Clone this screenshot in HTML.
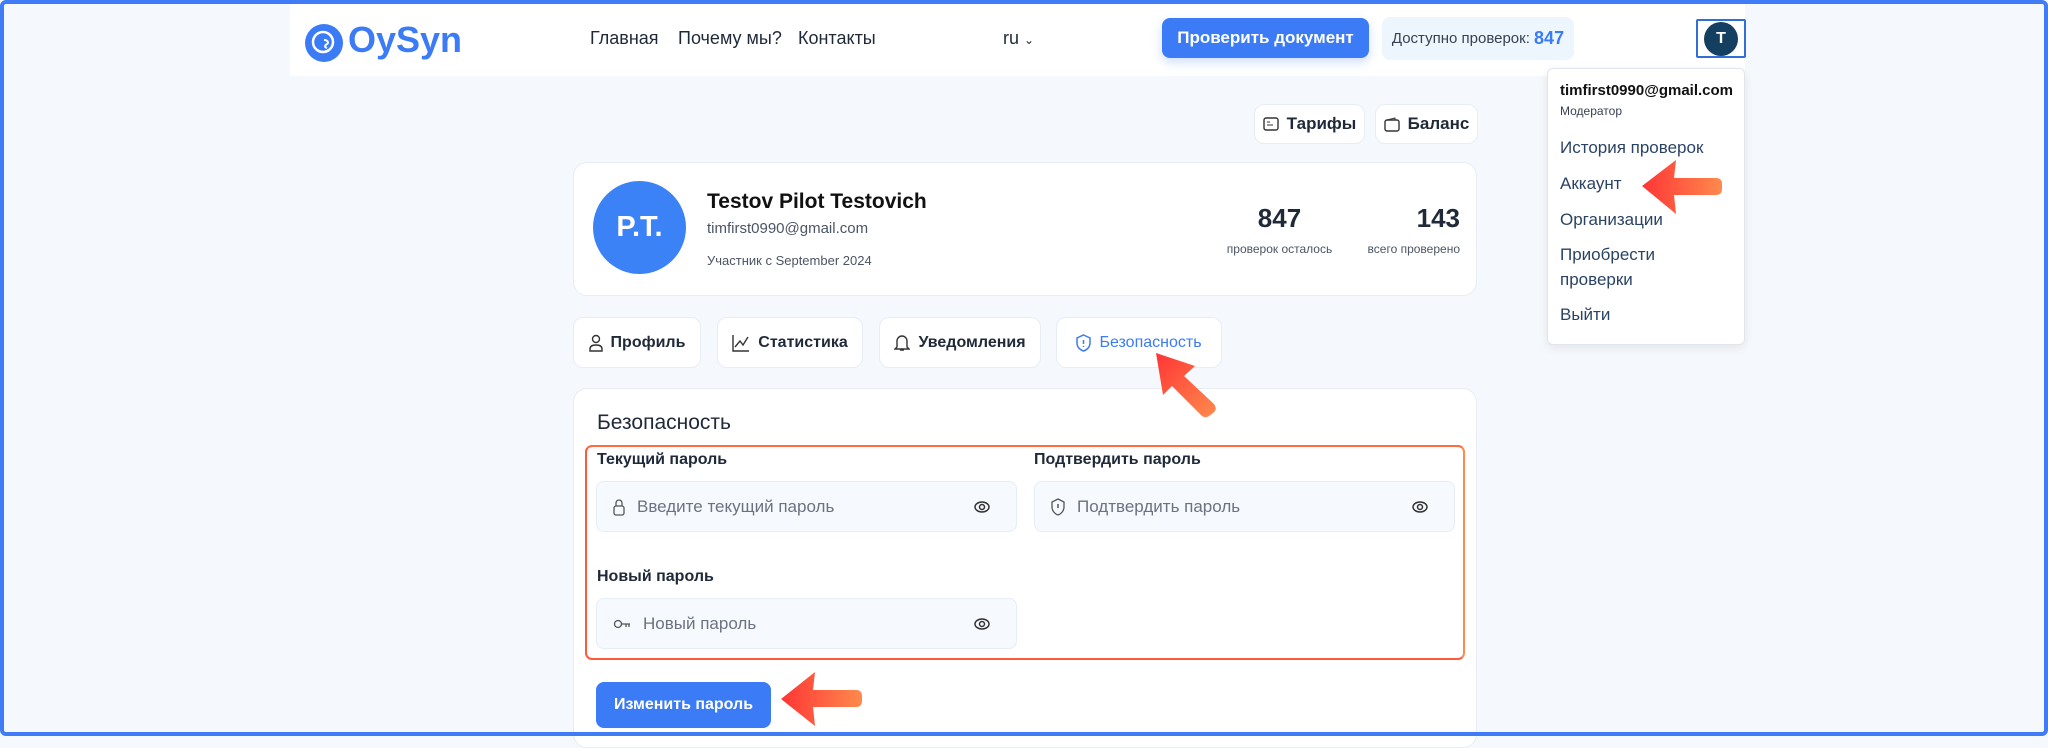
<!DOCTYPE html>
<html><head><meta charset="utf-8"><style>
*{box-sizing:border-box;margin:0;padding:0}
body{width:2048px;height:736px;overflow:hidden;background:#f5f8fc;font-family:"Liberation Sans","Noto Sans CJK SC",sans-serif;color:#1f2937;position:relative}
.frame{position:absolute;inset:0;border:4px solid #3f7cf5;border-radius:6px;pointer-events:none;z-index:50}
.abs{position:absolute}
.hdr{left:290px;top:0;width:1455px;height:76px;background:#fff}
.nav{font-size:18px;color:#1f2937;top:28px}
.btn{background:#3b7bf6;color:#fff;font-weight:bold;border-radius:8px;display:flex;align-items:center;justify-content:center}
.card{background:#fff;border:1px solid #e6edf5;border-radius:14px}
.wb{background:#fff;border:1px solid #e6edf5;border-radius:10px;display:flex;align-items:center;justify-content:center;font-size:17px;font-weight:bold;color:#1f2937;gap:8px}
.lbl{font-size:16px;font-weight:bold;color:#1f2937}
.inp{background:#f6f9fd;border:1px solid #e6edf5;border-radius:8px;height:51px;display:flex;align-items:center;padding:0 16px;font-size:17px;color:#6b7280}
.inp svg{margin-right:12px}
.eye{position:absolute;right:14px;top:17px}
.dd{font-size:17px;color:#2a4365;left:1560px}
</style></head><body>
<div class="frame"></div>
<div class="abs hdr"></div>
<svg class="abs" style="left:305px;top:24px" width="38" height="38" viewBox="0 0 38 38"><circle cx="19" cy="19" r="19" fill="#3b7bf6"/><circle cx="18" cy="18" r="10" fill="none" stroke="#fff" stroke-width="2.5"/><path d="M19 16c4 0 5 3 3 4-2 1-3 3 0 4" fill="none" stroke="#fff" stroke-width="2"/></svg>
<div class="abs" style="left:348px;top:19px;font-size:36px;font-weight:bold;color:#3b7bf6">OySyn</div>
<div class="abs nav" style="left:590px">Главная</div>
<div class="abs nav" style="left:678px">Почему мы?</div>
<div class="abs nav" style="left:798px">Контакты</div>
<div class="abs nav" style="left:1003px">ru <span style="font-size:12px">&#8964;</span></div>
<div class="abs btn" style="left:1162px;top:18px;width:207px;height:40px;font-size:17px;box-shadow:0 4px 10px rgba(59,123,246,.25)">Проверить документ</div>
<div class="abs" style="left:1382px;top:17px;width:192px;height:43px;background:#eef6fd;border-radius:8px;font-size:15px;color:#374151;display:flex;align-items:center;justify-content:center">Доступно проверок:&nbsp;<b style="color:#3b7bf6;font-size:18px">847</b></div>
<div class="abs" style="left:1696px;top:19px;width:50px;height:39px;border:2px solid #2f6fd6;border-radius:2px;display:flex;align-items:center;justify-content:center"><div style="width:34px;height:34px;border-radius:50%;background:#143f60;color:#fff;font-weight:bold;font-size:16px;display:flex;align-items:center;justify-content:center">T</div></div>

<div class="abs" style="left:1547px;top:68px;width:198px;height:277px;background:#fff;border:1px solid #e1e6ec;border-radius:6px;box-shadow:0 3px 10px rgba(0,0,0,.08)"></div>
<div class="abs" style="left:1560px;top:82px;font-size:15px;font-weight:bold;color:#111">timfirst0990@gmail.com</div>
<div class="abs" style="left:1560px;top:104px;font-size:12px;color:#374151">Модератор</div>
<div class="abs dd" style="top:138px">История проверок</div>
<div class="abs dd" style="top:174px">Аккаунт</div>
<div class="abs dd" style="top:210px">Организации</div>
<div class="abs dd" style="top:245px">Приобрести</div>
<div class="abs dd" style="top:270px">проверки</div>
<div class="abs dd" style="top:305px">Выйти</div>

<div class="abs wb" style="left:1254px;top:104px;width:111px;height:40px"><svg width="16" height="14"><rect x="1" y="1" width="14" height="12" rx="2" fill="none" stroke="#333" stroke-width="1.4"/><path d="M4 5h3M4 8h6" stroke="#333"/></svg>Тарифы</div>
<div class="abs wb" style="left:1375px;top:104px;width:103px;height:40px"><svg width="16" height="15"><rect x="1" y="3" width="14" height="11" rx="2" fill="none" stroke="#333" stroke-width="1.4"/><path d="M3 3l8-2v2" fill="none" stroke="#333"/></svg>Баланс</div>

<div class="abs card" style="left:573px;top:162px;width:904px;height:134px"></div>
<div class="abs" style="left:593px;top:181px;width:93px;height:93px;border-radius:50%;background:#3b82f6;color:#fff;font-weight:bold;font-size:29px;display:flex;align-items:center;justify-content:center">P.T.</div>
<div class="abs" style="left:707px;top:190px;font-size:21px;font-weight:bold;color:#111">Testov Pilot Testovich</div>
<div class="abs" style="left:707px;top:220px;font-size:15px;color:#4b5563">timfirst0990@gmail.com</div>
<div class="abs" style="left:707px;top:253px;font-size:13px;color:#4b5563">Участник с September 2024</div>
<div class="abs" style="left:1222px;top:203px;width:115px;text-align:center;font-size:26px;font-weight:bold;color:#1f2937">847</div>
<div class="abs" style="left:1222px;top:242px;width:115px;text-align:center;font-size:12px;color:#4b5563">проверок осталось</div>
<div class="abs" style="left:1355px;top:203px;width:105px;text-align:right;font-size:26px;font-weight:bold;color:#1f2937">143</div>
<div class="abs" style="left:1355px;top:242px;width:105px;text-align:right;font-size:12px;color:#4b5563">всего проверено</div>

<div class="abs wb" style="left:573px;top:317px;width:128px;height:51px;font-size:16px"><svg width="14" height="18"><circle cx="7" cy="5" r="3.5" fill="none" stroke="#333" stroke-width="1.4"/><path d="M1 17v-2q0-4 6-4t6 4v2z" fill="none" stroke="#333" stroke-width="1.4"/></svg>Профиль</div>
<div class="abs wb" style="left:717px;top:317px;width:146px;height:51px;font-size:16px"><svg width="18" height="18"><path d="M1 1v16h16M3 13l5-6 3 4 5-8" fill="none" stroke="#333" stroke-width="1.4"/></svg>Статистика</div>
<div class="abs wb" style="left:879px;top:317px;width:162px;height:51px;font-size:16px"><svg width="16" height="19"><path d="M3 14V8a5 5 0 0110 0v6l2 2H1zM6 17h4" fill="none" stroke="#333" stroke-width="1.4"/></svg>Уведомления</div>
<div class="abs wb" style="left:1056px;top:317px;width:166px;height:51px;font-size:16px;color:#3b7bf6;font-weight:normal"><svg width="15" height="18"><path d="M7.5 1L14 4v5c0 4-3 7-6.5 8C4 16 1 13 1 9V4z" fill="none" stroke="#3b7bf6" stroke-width="1.5"/><path d="M7.5 6v4M7.5 12v1" stroke="#3b7bf6" stroke-width="1.5"/></svg>Безопасность</div>

<div class="abs card" style="left:573px;top:388px;width:904px;height:360px"></div>
<div class="abs" style="left:597px;top:411px;font-size:21px;color:#1f2937">Безопасность</div>
<div class="abs" style="left:585px;top:445px;width:880px;height:215px;border:2px solid #ff5a3c;border-radius:7px;border-right-color:#ff8a4c;border-top-color:#ff6a40"></div>
<div class="abs lbl" style="left:597px;top:451px">Текущий пароль</div>
<div class="abs lbl" style="left:1034px;top:451px">Подтвердить пароль</div>
<div class="abs inp" style="left:596px;top:481px;width:421px"><svg width="12" height="18"><rect x="1" y="8" width="10" height="9" rx="2" fill="none" stroke="#555" stroke-width="1.3"/><path d="M3 8V5a3 3 0 016 0v3" fill="none" stroke="#555" stroke-width="1.3"/></svg>Введите текущий пароль<svg class="eye" width="16" height="16"><ellipse cx="8" cy="8" rx="7" ry="5" fill="none" stroke="#333" stroke-width="1.5"/><circle cx="8" cy="8" r="2.5" fill="none" stroke="#333" stroke-width="1.5"/></svg></div>
<div class="abs inp" style="left:1034px;top:481px;width:421px"><svg width="14" height="18"><path d="M7 1L13 4v5c0 4-3 7-6 8C4 16 1 13 1 9V4z" fill="none" stroke="#555" stroke-width="1.3"/><path d="M7 6v4" stroke="#555" stroke-width="1.5"/></svg>Подтвердить пароль<svg class="eye" width="16" height="16"><ellipse cx="8" cy="8" rx="7" ry="5" fill="none" stroke="#333" stroke-width="1.5"/><circle cx="8" cy="8" r="2.5" fill="none" stroke="#333" stroke-width="1.5"/></svg></div>
<div class="abs lbl" style="left:597px;top:568px">Новый пароль</div>
<div class="abs inp" style="left:596px;top:598px;width:421px"><svg width="18" height="12"><circle cx="5" cy="6" r="3.5" fill="none" stroke="#555" stroke-width="1.3"/><path d="M8.5 6H17M13 6v3M16 6v3" stroke="#555" stroke-width="1.3"/></svg>Новый пароль<svg class="eye" width="16" height="16"><ellipse cx="8" cy="8" rx="7" ry="5" fill="none" stroke="#333" stroke-width="1.5"/><circle cx="8" cy="8" r="2.5" fill="none" stroke="#333" stroke-width="1.5"/></svg></div>
<div class="abs btn" style="left:596px;top:682px;width:175px;height:46px;font-size:16px">Изменить пароль</div>

<svg class="abs" style="left:0;top:0;z-index:40" width="2048" height="736">
<defs><linearGradient id="g" x1="0" x2="1"><stop offset="0" stop-color="#ff3535"/><stop offset="1" stop-color="#ff8a4c"/></linearGradient>
<linearGradient id="g2" x1="0" y1="0" x2="1" y2="1"><stop offset="0" stop-color="#ff3535"/><stop offset="1" stop-color="#ff8a4c"/></linearGradient></defs>
<path d="M1642 186 L1676 160 L1674 178 L1716 178 Q1722 178 1722 184 L1722 189 Q1722 195 1716 195 L1674 195 L1676 214 Z" fill="url(#g)"/>
<path d="M781 699 L815 672 L813 690 L856 690 Q862 690 862 696 L862 701 Q862 707 856 707 L813 707 L815 726 Z" fill="url(#g)"/>
<path d="M1156 353 L1195 366 L1184 376 L1214 404 Q1218 409 1213 413 L1209 416 Q1204 419 1200 414 L1172 386 L1163 395 Z" fill="url(#g2)"/>
</svg>
</body></html>
